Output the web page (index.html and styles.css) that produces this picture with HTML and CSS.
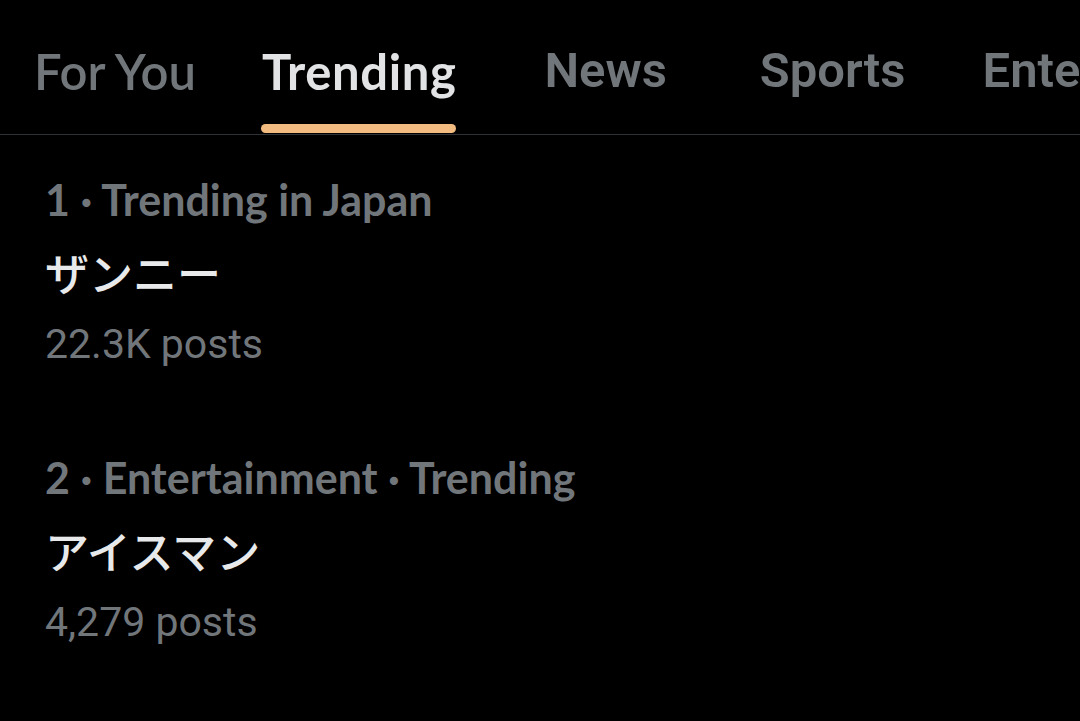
FILE: index.html
```html
<!DOCTYPE html>
<html lang="ja">
<head>
<meta charset="utf-8">
<link rel="stylesheet" href="styles.css">
</head>
<body>
<nav class="tabs">
  <div class="tab tab-foryou">For You</div>
  <div class="tab tab-active">Trending<span class="indicator"></span></div>
  <div class="tab tab-plex tab-news">News</div>
  <div class="tab tab-plex tab-sports">Sports</div>
  <div class="tab tab-plex tab-ent">Entertainment</div>
</nav>
<main class="list">
  <section class="trend">
    <div class="meta">1 · Trending in Japan</div>
    <div class="name">ザンニー</div>
    <div class="count">22.3K posts</div>
  </section>
  <section class="trend">
    <div class="meta">2 · Entertainment · Trending</div>
    <div class="name">アイスマン</div>
    <div class="count">4,279 posts</div>
  </section>
</main>
</body>
</html>
```
FILE: styles.css
```css
html, body {
  margin: 0;
  padding: 0;
  background: #000;
  overflow: hidden;
  width: 1080px;
  height: 721px;
}
body {
  font-family: Lato, "Noto Sans CJK JP", sans-serif;
}
.tabs {
  display: flex;
  align-items: flex-start;
  height: 134px;
  border-bottom: 1px solid #2f3336;
  padding-left: 34px;
  white-space: nowrap;
  overflow: hidden;
}
.tab {
  position: relative;
  font-size: 49px;
  line-height: 50px;
  padding-top: 46px;
  color: #71767b;
  font-weight: 600;
}
.tab-plex {
  font-family: Roboto, sans-serif;
  font-weight: 600;
  font-size: 49px;
}
.tab-foryou { margin-right: 66px; }
.tab-active { color: #e1e3e4; font-weight: 700; margin-right: 88px; letter-spacing: 0.6px; }
.tab-news { margin-right: 93px; }
.tab-sports { margin-right: 77px; }
.indicator {
  position: absolute;
  left: -1px;
  right: 0;
  top: 124px;
  height: 9px;
  border-radius: 5px;
  background: #f2bb80;
}
.list {
  padding-left: 45px;
  padding-top: 29px;
}
.trend {
  padding-bottom: 62px;
}
.meta {
  font-size: 43px;
  line-height: 72px;
  font-weight: 700;
  color: #71767b;
}
.name {
  font-family: "Noto Sans CJK JP", sans-serif;
  font-size: 44px;
  line-height: 72px;
  font-weight: 500;
  color: #e7e9ea;
}
.count {
  font-family: Roboto, "Noto Sans", sans-serif;
  font-size: 41px;
  line-height: 72px;
  color: #71767b;
}
```
